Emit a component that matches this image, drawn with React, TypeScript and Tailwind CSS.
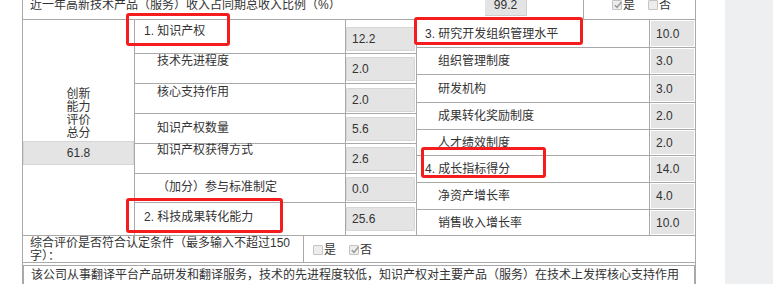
import React from "react"

const font = "font-['Liberation_Sans','Noto_Sans_CJK_SC',sans-serif]"

function Box({ checked }: { checked?: boolean }) {
  return (
    <span className="relative inline-block w-[10px] h-[10px] border border-[#c4c4c4] bg-[#ededed] rounded-[1px] shrink-0">
      {checked && (
        <svg viewBox="0 0 10 10" className="absolute left-[0px] top-[-1px] w-[10px] h-[10px]">
          <path d="M1.8 5.2 L4 7.4 L8.4 2" fill="none" stroke="#9b9b9b" strokeWidth="1.6" />
        </svg>
      )}
    </span>
  )
}

function YesNo({ yes }: { yes: boolean }) {
  return (
    <div className="flex items-center">
      <Box checked={yes} />
      <span className="ml-[1px]">是</span>
      <span className="ml-[13px]" />
      <Box checked={!yes} />
      <span className="ml-[1px]">否</span>
    </div>
  )
}

const leftRows = [
  { label: "1. 知识产权", value: "12.2", row: "h-[34px]", lab: "pl-[9px] pt-[5px]", pb: "pb-[2px]" },
  { label: "技术先进程度", value: "2.0", row: "h-[30px]", lab: "pl-[22px] pt-[1px]", pb: "pb-[2px]" },
  { label: "核心支持作用", value: "2.0", row: "h-[30px]", lab: "pl-[22px] pt-[2px]", pb: "pb-[1px]" },
  { label: "知识产权数量", value: "5.6", row: "h-[30px]", lab: "pl-[22px] pt-[8px]", pb: "pb-[2px]" },
  { label: "知识产权获得方式", value: "2.6", row: "h-[30px]", lab: "pl-[22px] pt-[0px]", pb: "pb-[2px]" },
  { label: "（加分）参与标准制定", value: "0.0", row: "h-[29px]", lab: "pl-[22px] pt-[7px]", pb: "pb-[1px]" },
  { label: "2. 科技成果转化能力", value: "25.6", row: "h-[32px]", lab: "pl-[9px] pt-[8px]", pb: "pb-[4px]" },
]

const rightRows = [
  { label: "3. 研究开发组织管理水平", value: "10.0", row: "h-[28px]", pl: "pl-[8px]" },
  { label: "组织管理制度", value: "3.0", row: "h-[27px]", pl: "pl-[21px]" },
  { label: "研发机构", value: "3.0", row: "h-[28px]", pl: "pl-[21px]" },
  { label: "成果转化奖励制度", value: "2.0", row: "h-[27px]", pl: "pl-[21px]" },
  { label: "人才绩效制度", value: "2.0", row: "h-[26px]", pl: "pl-[21px]" },
  { label: "4. 成长指标得分", value: "14.0", row: "h-[27px]", pl: "pl-[8px]" },
  { label: "净资产增长率", value: "4.0", row: "h-[27px]", pl: "pl-[21px]" },
  { label: "销售收入增长率", value: "10.0", row: "h-[25px]", pl: "pl-[21px]" },
]

export default function App() {
  return (
    <div className={`relative flex w-[773px] h-[284px] overflow-hidden bg-white text-[12px] leading-[12px] text-[#333] ${font}`}>
      <div className="ml-[22px] w-[674px] shrink-0 border-x border-[#a9a9a9]">
        {/* 上一行：收入比例 */}
        <div className="flex h-[20px] border-b border-[#a9a9a9]">
          <div className="flex w-[561px] border-r border-[#a9a9a9]">
            <div className="w-[462px] pl-[7px] mt-[-1px] whitespace-nowrap">近一年高新技术产品（服务）收入占同期总收入比例（%）</div>
            <div className="w-[42px] h-[16px] bg-[#e4e4e4] border-b border-r border-[#cfcfcf] text-center leading-[11px]">99.2</div>
          </div>
          <div className="flex-1 pl-[28px] mt-[-1px]">
            <YesNo yes={true} />
          </div>
        </div>

        {/* 创新能力评价 */}
        <div className="flex h-[216px] border-b border-[#a9a9a9]">
          <div className="w-[112px] border-r border-[#a9a9a9] flex flex-col justify-center items-center">
            <div className="text-center leading-[13px] mt-[-2px]">
              创新<br />能力<br />评价<br />总分
            </div>
            <div className="mt-[1px] w-full h-[24px] bg-[#e4e4e4] border border-[#d6d6d6] flex items-center justify-center">61.8</div>
          </div>

          <div className="w-[281px] flex flex-col">
            {leftRows.map((r, i) => (
              <div key={r.label} className={`flex ${r.row} ${i < leftRows.length - 1 ? "border-b border-[#a9a9a9]" : ""}`}>
                <div className={`w-[211px] border-r border-[#a9a9a9] whitespace-nowrap ${r.lab}`}>{r.label}</div>
                <div className={`flex-1 flex items-end ${r.pb}`}>
                  <div className="w-[69px] h-[24px] bg-[#e4e4e4] border border-[#d6d6d6] rounded-[1px] flex items-center pl-[5px]">{r.value}</div>
                </div>
              </div>
            ))}
          </div>

          <div className="flex-1 flex flex-col border-l border-[#a9a9a9]">
            {rightRows.map((r, i) => (
              <div key={r.label} className={`flex ${r.row} ${i < rightRows.length - 1 ? "border-b border-[#a9a9a9]" : ""}`}>
                <div className={`w-[233px] border-r border-[#a9a9a9] flex items-center whitespace-nowrap ${r.pl}`}>{r.label}</div>
                <div className="flex-1 p-[1px]">
                  <div className="h-full bg-[#e4e4e4] flex items-center pl-[5px]">{r.value}</div>
                </div>
              </div>
            ))}
          </div>
        </div>

        {/* 综合评价 */}
        <div className="flex h-[27px] border-b border-[#a9a9a9]">
          <div className="w-[281px] border-r border-[#a9a9a9] pl-[7px] pr-[8px] pt-[1px] leading-[13px]">
            综合评价是否符合认定条件（最多输入不超过150字）：
          </div>
          <div className="flex-1 flex items-center pl-[9px] pt-[2px]">
            <YesNo yes={false} />
          </div>
        </div>

        <div className="pt-[2px]">
          <div className="h-[30px] border border-[#a9a9a9] pl-[7px] pt-[3px] whitespace-nowrap">
            该公司从事翻译平台产品研发和翻译服务，技术的先进程度较低，知识产权对主要产品（服务）在技术上发挥核心支持作用
          </div>
        </div>
      </div>

      <div className="w-[29px] shrink-0" />
      <div className="flex-1 bg-[#eeeff1]" />

      {/* 标注框 */}
      <div className="absolute left-[126px] top-[13px] w-[104px] h-[33px] border-[3px] border-[#f41c1c] rounded-[3px]" />
      <div className="absolute left-[414px] top-[17px] w-[169px] h-[28px] border-[3px] border-[#f41c1c] rounded-[3px]" />
      <div className="absolute left-[421px] top-[147px] w-[125px] h-[31px] border-[3px] border-[#f41c1c] rounded-[3px]" />
      <div className="absolute left-[126px] top-[198px] w-[157px] h-[35px] border-[3px] border-[#f41c1c] rounded-[3px]" />
    </div>
  )
}
